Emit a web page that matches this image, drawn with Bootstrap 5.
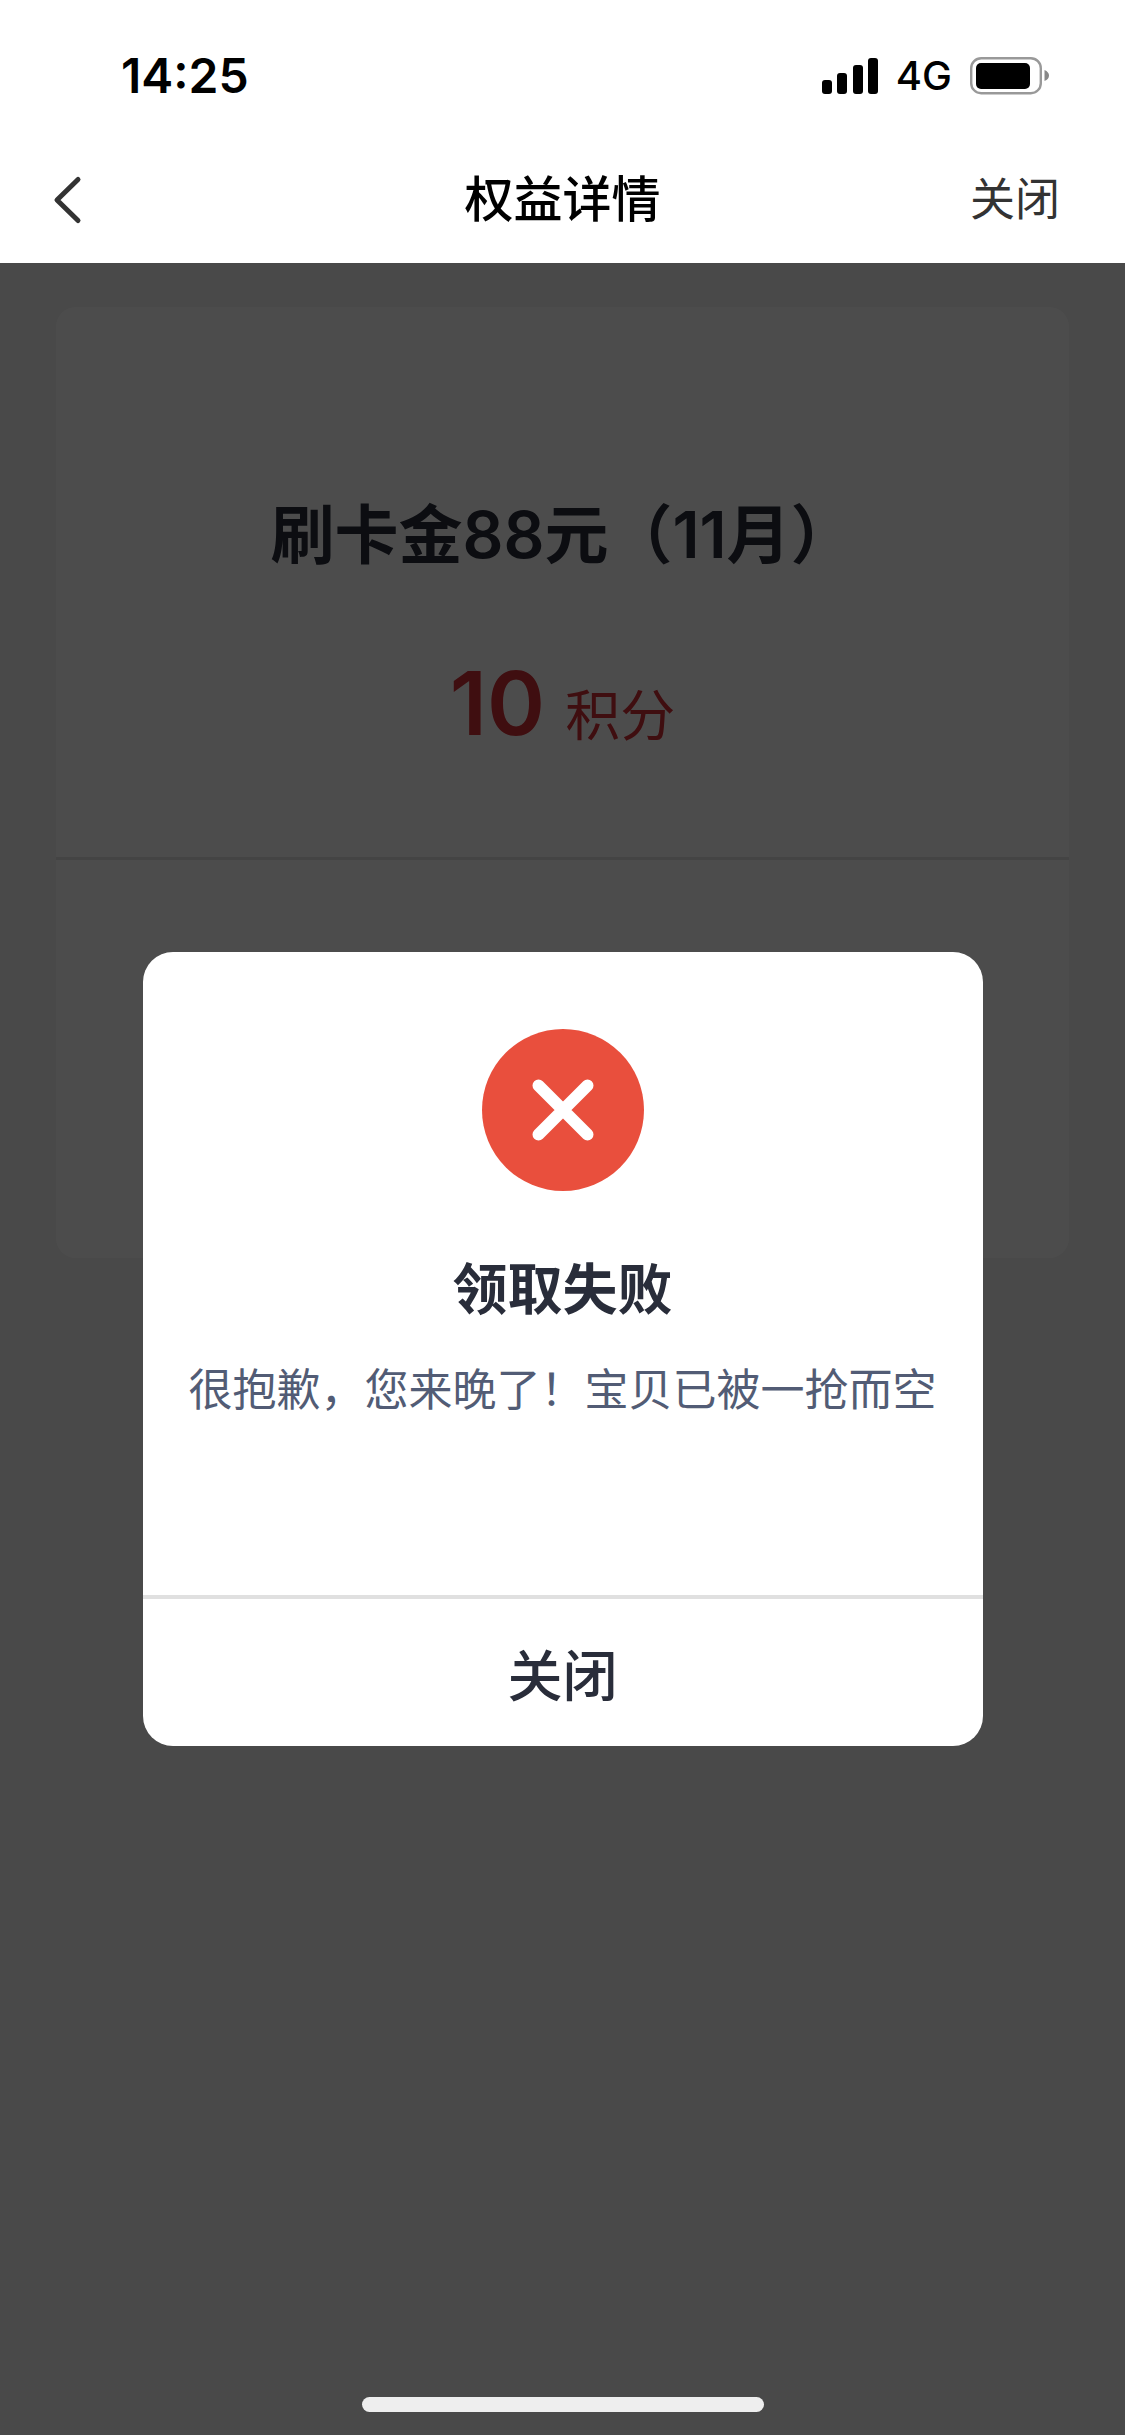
<!DOCTYPE html>
<html lang="zh-CN">
<head>
<meta charset="utf-8">
<meta name="viewport" content="width=device-width, initial-scale=1">
<title>权益详情</title>
<link href="https://cdn.jsdelivr.net/npm/bootstrap@5.3.0/dist/css/bootstrap.min.css" rel="stylesheet">
<style>
  body { font-family: Inter, "Noto Sans CJK SC", sans-serif; color: #292d3a; background: #f5f5f5; }
  .status-bar { height: 136px; padding: 40px 75px 0 121px; color: #000; }
  .clock { font-size: 48px; line-height: 72px; font-weight: 600; }
  .network { font-size: 40px; line-height: 72px; font-weight: 500; margin: 0 18px 0 18px; }
  .status-icons { height: 72px; }
  .title-bar { height: 127px; }
  .title-bar h1 { font-size: 49px; line-height: 72px; font-weight: 500; color: #000; }
  .side-btn { font-size: 45px; line-height: 72px; color: #333; }
  .back-btn { margin-left: 47px; }
  .close-btn { margin-right: 65px; }
  .page-body { padding: 44px 56px; }
  .benefit { border-radius: 20px; }
  .benefit-head { padding: 180px 24px 88px; border-bottom: 3px solid #e4e4e4; }
  .benefit-name { font-size: 64px; line-height: 96px; font-weight: 600; margin-bottom: 54px; color: #292d3a; }
  .points { line-height: 132px; gap: 20px; color: #d42f36; }
  .points-value { font-size: 88px; font-weight: 600; }
  .points-unit { font-size: 55px; line-height: 55px; font-weight: 400; }
  .benefit-info { height: 398px; }
  .shade { background: rgba(0, 0, 0, .7); }
  .result-box { width: 840px; border-radius: 30px; }
  .result-main { padding: 77px 24px 172px; }
  .result-main h2 { font-size: 55px; line-height: 84px; font-weight: 600; color: #292d3a; margin: 56px 0 26px; }
  .result-main p { font-size: 44px; line-height: 66px; color: #525c75; }
  .result-close { border-top: 4px solid #e0e0e0; border-radius: 0 0 30px 30px; font-size: 55px; line-height: 84px; padding: 35px 0 28px; font-weight: 500; color: #292d3a; }
  .home-bar { width: 402px; height: 15px; bottom: 23px; background: #eee; }
</style>
</head>
<body>
<div class="d-flex flex-column min-vh-100">
  <header class="bg-white">
    <div class="status-bar d-flex justify-content-between align-items-start">
      <span class="clock">14:25</span>
      <div class="status-icons d-flex align-items-center">
        <svg width="56" height="36" viewBox="0 0 56 36" aria-hidden="true">
          <rect x="0" y="22" width="10" height="14" rx="3"/>
          <rect x="15" y="15" width="10" height="21" rx="3"/>
          <rect x="31" y="7" width="10" height="29" rx="3"/>
          <rect x="46" y="0" width="10" height="36" rx="3"/>
        </svg>
        <span class="network">4G</span>
        <svg width="80" height="38" viewBox="0 0 80 38" aria-hidden="true">
          <rect x="1.2" y="1.2" width="69.6" height="35" rx="10" fill="none" stroke="#999" stroke-width="2.4"/>
          <rect x="6" y="6" width="54" height="26" rx="5"/>
          <path d="M74.500 13q4.500 2 4.500 5.500t-4.500 5.500z" fill="#888"/>
        </svg>
      </div>
    </div>
    <nav class="title-bar row g-0 align-items-center" aria-label="页面导航">
      <div class="col">
        <button type="button" class="btn side-btn back-btn p-0 border-0" aria-label="返回">
          <svg class="d-block" width="40" height="56" viewBox="0 0 40 56" fill="none" stroke="#333" stroke-width="5" stroke-linecap="round" stroke-linejoin="round" aria-hidden="true"><path d="M31 7.500 10 28l21 20.500"/></svg>
        </button>
      </div>
      <h1 class="col-auto m-0">权益详情</h1>
      <div class="col text-end">
        <button type="button" class="btn side-btn close-btn p-0 border-0">关闭</button>
      </div>
    </nav>
  </header>
  <main class="page-body position-relative flex-grow-1">
    <section class="benefit bg-white">
      <div class="benefit-head text-center">
        <h2 class="benefit-name mt-0">刷卡金88元（11月）</h2>
        <div class="points d-flex justify-content-center align-items-baseline">
          <span class="points-value">10</span><span class="points-unit">积分</span>
        </div>
      </div>
      <div class="benefit-info"></div>
    </section>
    <div class="shade position-absolute top-0 start-0 w-100 h-100 d-flex align-items-center justify-content-center">
      <div class="result-box bg-white text-center" role="dialog" aria-modal="true" aria-labelledby="result-title">
        <div class="result-main">
          <svg width="162" height="162" viewBox="0 0 162 162" aria-hidden="true">
            <circle cx="81" cy="81" r="81" fill="#e94f3d"/>
            <path d="M56.500 56.500l49 49M105.500 56.500l-49 49" stroke="#fff" stroke-width="12" stroke-linecap="round"/>
          </svg>
          <h2 id="result-title">领取失败</h2>
          <p class="m-0">很抱歉，您来晚了！宝贝已被一抢而空</p>
        </div>
        <button type="button" class="result-close btn w-100 border-start-0 border-end-0 border-bottom-0">关闭</button>
      </div>
      <div class="home-bar position-absolute start-50 translate-middle-x rounded-pill"></div>
    </div>
  </main>
</div>
<script src="https://cdn.jsdelivr.net/npm/bootstrap@5.3.0/dist/js/bootstrap.bundle.min.js"></script>
</body>
</html>
